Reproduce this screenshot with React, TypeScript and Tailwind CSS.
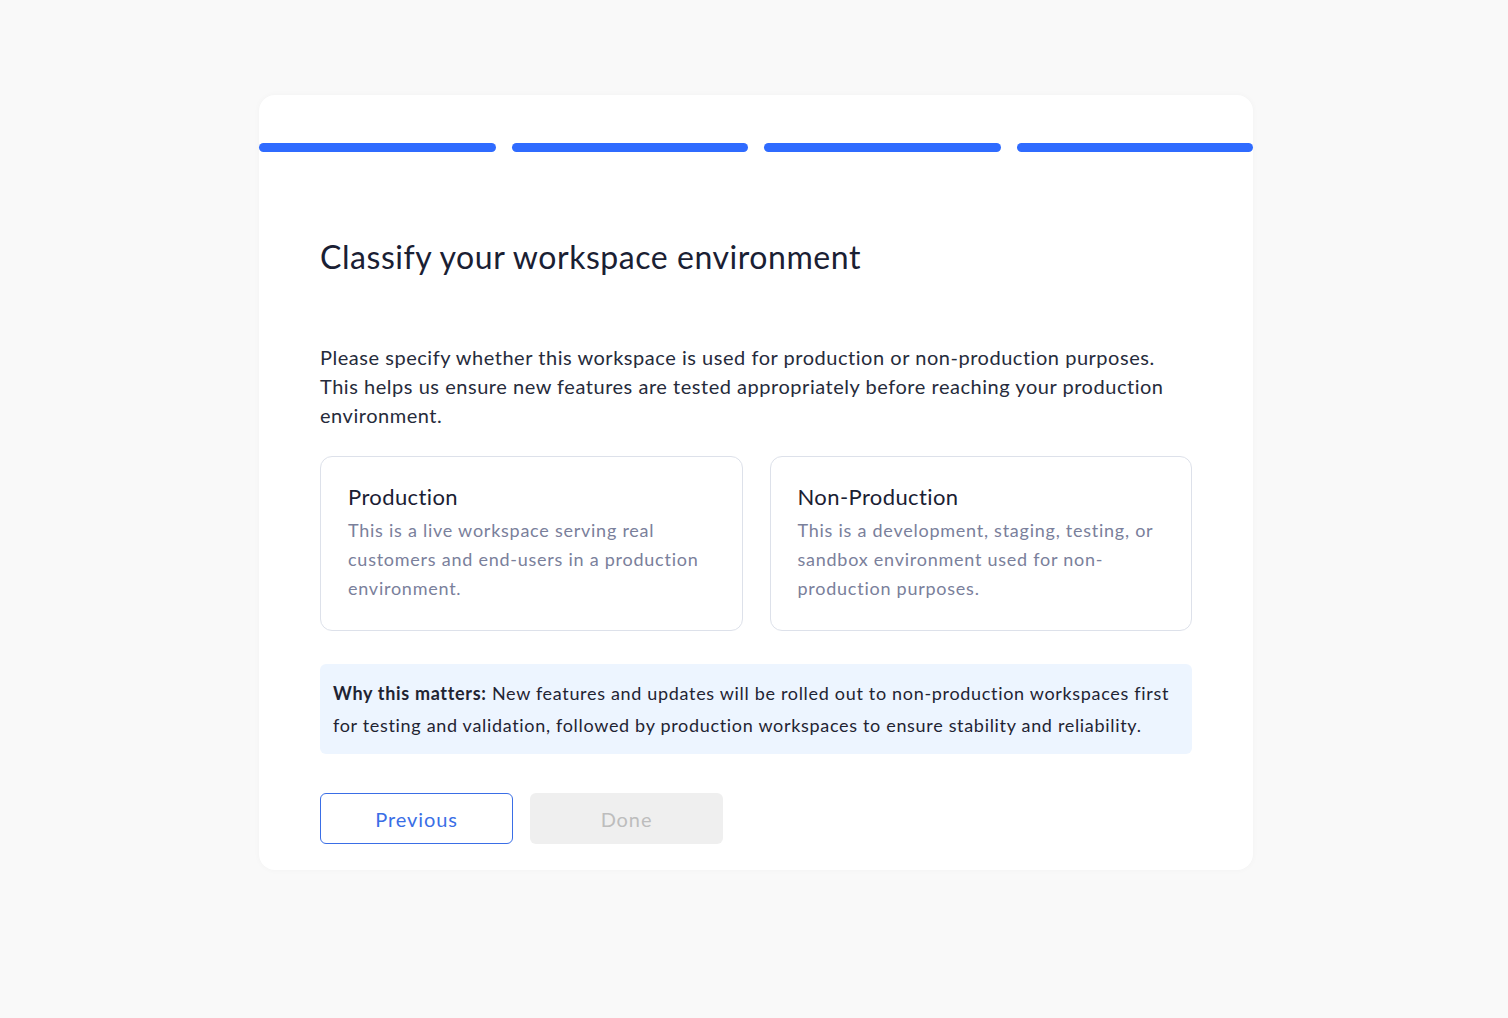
import React from 'react';

const options = [
  {
    title: 'Production',
    text: 'This is a live workspace serving real customers and end-users in a production environment.',
  },
  {
    title: 'Non-Production',
    text: 'This is a development, staging, testing, or sandbox environment used for non-production purposes.',
  },
];

const App: React.FC = () => {
  return (
    <div className="min-h-screen w-full bg-[#f9f9f9] pt-[95px] font-['Lato',sans-serif]">
      <div className="ml-[259px] w-[994px] rounded-2xl bg-white pt-12 pb-[26px] shadow-[0_0_6px_rgba(0,0,0,0.03)]">
        {/* Progress */}
        <div className="flex gap-4">
          <div className="h-[9px] flex-1 rounded-full bg-[#2f6bff]"></div>
          <div className="h-[9px] flex-1 rounded-full bg-[#2f6bff]"></div>
          <div className="h-[9px] flex-1 rounded-full bg-[#2f6bff]"></div>
          <div className="h-[9px] flex-1 rounded-full bg-[#2f6bff]"></div>
        </div>

        <div className="px-[61px]">
          <h1 className="mt-[85px] text-[32px] leading-10 tracking-[0.55px] text-[#1a2033]">
            Classify your workspace environment
          </h1>

          <p className="mt-[66px] text-[20px] leading-[29px] tracking-[0.53px] text-[#262b3b]">
            Please specify whether this workspace is used for production or non-production purposes.
            <br />
            This helps us ensure new features are tested appropriately before reaching your production
            environment.
          </p>

          {/* Options */}
          <div className="mt-[26px] grid grid-cols-2 gap-[27px]">
            {options.map((o) => (
              <div
                key={o.title}
                className="h-[175px] rounded-xl border border-[#dde1ea] px-[27px] pt-[24px]"
              >
                <div className="text-[22px] leading-8 tracking-[0.4px] text-[#1a2033]">{o.title}</div>
                <div className="mt-[3px] text-[18px] leading-[29px] tracking-[0.75px] text-[#7a809b]">
                  {o.text}
                </div>
              </div>
            ))}
          </div>

          {/* Info */}
          <div className="mt-[33px] rounded-md bg-[#edf5ff] px-[13px] py-[13px] text-[18px] leading-8 tracking-[0.68px] text-[#1f2433]">
            <span className="font-bold">Why this matters:</span> New features and updates will be rolled
            out to non-production workspaces first for testing and validation, followed by production
            workspaces to ensure stability and reliability.
          </div>

          {/* Buttons */}
          <div className="mt-[39px] flex gap-[17px]">
            <button className="h-[51px] w-[193px] rounded-md border-[1.5px] border-[#3a6ee6] text-[20px] tracking-[0.9px] text-[#3a6ee6]">
              Previous
            </button>
            <button className="h-[51px] w-[193px] rounded-md bg-[#efefef] text-[20px] tracking-[0.9px] text-[#bdbdbd]">
              Done
            </button>
          </div>
        </div>
      </div>
    </div>
  );
};

export default App;
